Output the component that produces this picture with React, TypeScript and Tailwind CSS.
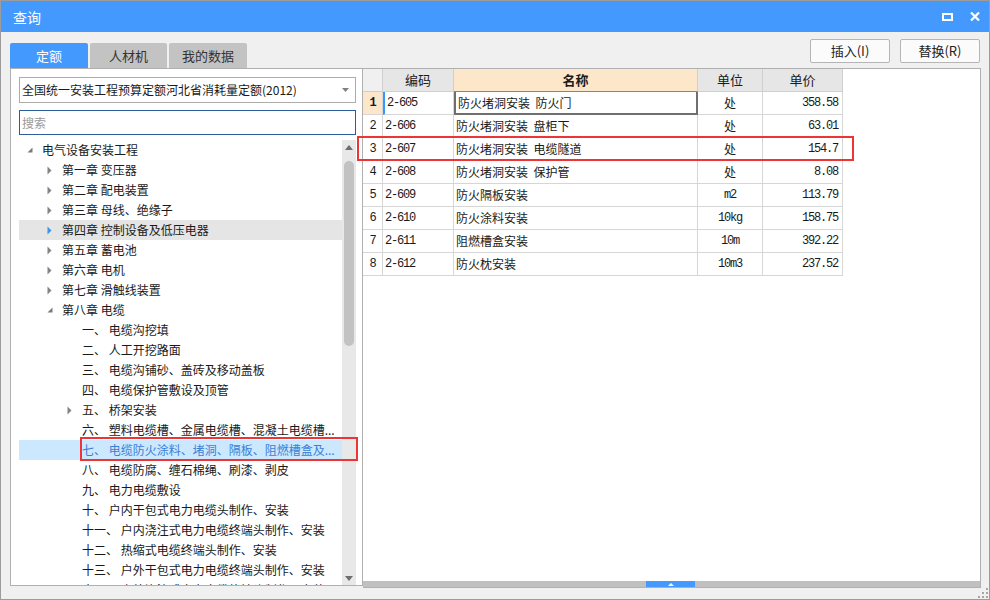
import React from "react";

type Node = {
	level: 0 | 1 | 2;
	label: string;
	arrow?: "open" | "closed";
	state?: "hover" | "selected";
};

const tree: Node[] = [
	{ level: 0, label: "电气设备安装工程", arrow: "open" },
	{ level: 1, label: "第一章 变压器", arrow: "closed" },
	{ level: 1, label: "第二章 配电装置", arrow: "closed" },
	{ level: 1, label: "第三章 母线、绝缘子", arrow: "closed" },
	{ level: 1, label: "第四章 控制设备及低压电器", arrow: "closed", state: "hover" },
	{ level: 1, label: "第五章 蓄电池", arrow: "closed" },
	{ level: 1, label: "第六章 电机", arrow: "closed" },
	{ level: 1, label: "第七章 滑触线装置", arrow: "closed" },
	{ level: 1, label: "第八章 电缆", arrow: "open" },
	{ level: 2, label: "一、 电缆沟挖填" },
	{ level: 2, label: "二、 人工开挖路面" },
	{ level: 2, label: "三、 电缆沟铺砂、盖砖及移动盖板" },
	{ level: 2, label: "四、 电缆保护管敷设及顶管" },
	{ level: 2, label: "五、 桥架安装", arrow: "closed" },
	{ level: 2, label: "六、 塑料电缆槽、金属电缆槽、混凝土电缆槽..." },
	{ level: 2, label: "七、 电缆防火涂料、堵洞、隔板、阻燃槽盒及...", state: "selected" },
	{ level: 2, label: "八、 电缆防腐、缠石棉绳、刷漆、剥皮" },
	{ level: 2, label: "九、 电力电缆敷设" },
	{ level: 2, label: "十、 户内干包式电力电缆头制作、安装" },
	{ level: 2, label: "十一、 户内浇注式电力电缆终端头制作、安装" },
	{ level: 2, label: "十二、 热缩式电缆终端头制作、安装" },
	{ level: 2, label: "十三、 户外干包式电力电缆终端头制作、安装" },
	{ level: 2, label: "十四、 户外浇注式电力电缆终端头制作、安装" },
];

const rows = [
	{ code: "2-605", name: "防火堵洞安装  防火门", unit: "处", price: "358.58" },
	{ code: "2-606", name: "防火堵洞安装  盘柜下", unit: "处", price: "63.01" },
	{ code: "2-607", name: "防火堵洞安装  电缆隧道", unit: "处", price: "154.7" },
	{ code: "2-608", name: "防火堵洞安装  保护管", unit: "处", price: "8.08" },
	{ code: "2-609", name: "防火隔板安装", unit: "m2", price: "113.79" },
	{ code: "2-610", name: "防火涂料安装", unit: "10kg", price: "158.75" },
	{ code: "2-611", name: "阻燃槽盒安装", unit: "10m", price: "392.22" },
	{ code: "2-612", name: "防火枕安装", unit: "10m3", price: "237.52" },
];

const indent = ["pl-0", "pl-[20px]", "pl-[40px]"];
const mono = "font-['Liberation_Mono',monospace] text-[12px] tracking-[-1.2px]";

const Arrow = ({ kind, blue }: { kind?: "open" | "closed"; blue?: boolean }) => {
	if (!kind) return null;
	if (kind === "open")
		return (
			<svg width="6" height="6" viewBox="0 0 6 6">
				<polygon points="5.5,0.5 5.5,5.5 0.5,5.5" fill="#7a7a7a" />
			</svg>
		);
	return (
		<svg width="5" height="9" viewBox="0 0 5 9">
			<polygon points="0.5,0.5 4.5,4.5 0.5,8.5" fill={blue ? "#3d95e8" : "#838383"} />
		</svg>
	);
};

const App: React.FC = () => {
	return (
		<div className="relative w-[990px] h-[600px] flex flex-col bg-[#f0f0f0] border border-[#9c9c9c] overflow-hidden font-['Noto_Sans_CJK_SC','Noto_Sans',sans-serif] text-[#1a1a1a]">
			{/* title bar */}
			<div className="h-[31px] shrink-0 bg-[#4499ff] flex items-center justify-between pl-[12px] pr-[9px]">
				<span className="text-white text-[14px] leading-none">查询</span>
				<div className="flex items-center gap-[17px]">
					<svg width="11" height="8" viewBox="0 0 11 8">
						<rect x="1" y="1" width="9" height="6" fill="none" stroke="#fff" strokeWidth="2" />
					</svg>
					<svg width="10" height="9" viewBox="0 0 10 9">
						<path d="M1 0.5 L9 8.5 M9 0.5 L1 8.5" stroke="#fff" strokeWidth="2.2" />
					</svg>
				</div>
			</div>

			{/* tabs and buttons */}
			<div className="h-[36px] shrink-0 flex justify-between pl-[9px] pr-[9px]">
				<div className="flex items-end gap-[2px]">
					<div className="w-[78px] h-[25px] rounded-t-[2px] bg-[#4499ff] text-white text-[13px] flex items-center justify-center">定额</div>
					<div className="w-[77px] h-[25px] rounded-t-[2px] bg-[#c3c3c3] text-[#333] text-[13px] flex items-center justify-center">人材机</div>
					<div className="w-[78px] h-[25px] rounded-t-[2px] bg-[#c3c3c3] text-[#333] text-[13px] flex items-center justify-center">我的数据</div>
				</div>
				<div className="flex gap-[10px] pt-[7px]">
					<button className="w-[80px] h-[24px] rounded-[2px] border border-[#b5b5b5] bg-[#fbfbfb] text-[13px] text-[#222]">插入(I)</button>
					<button className="w-[80px] h-[24px] rounded-[2px] border border-[#b5b5b5] bg-[#fbfbfb] text-[13px] text-[#222]">替换(R)</button>
				</div>
			</div>

			{/* content */}
			<div className="flex-1 min-h-0 flex pl-[9px] pr-[8px] pb-[11px]">
				{/* left panel */}
				<div className="w-[353px] shrink-0 mb-[2px] border border-[#b0b0b0] bg-white flex flex-col pt-[8px] pl-[8px] pr-[6px]">
					<div className="h-[26px] shrink-0 border border-[#acacac] flex items-center justify-between pl-[2px] pr-[6px]">
						<span className="text-[12px] leading-none">全国统一安装工程预算定额河北省消耗量定额(2012)</span>
						<svg width="7" height="4" viewBox="0 0 7 4">
							<polygon points="0,0 7,0 3.5,4" fill="#808080" />
						</svg>
					</div>
					<div className="h-[25px] mt-[7px] shrink-0 border border-[#2c5c9c] flex items-center pl-[2px]">
						<span className="text-[12px] leading-none text-[#9a9a9a]">搜索</span>
					</div>
					<div className="flex-1 min-h-0 mt-[5px] flex overflow-hidden">
						<div className="flex-1 min-w-0">
							{tree.map((n, i) => (
								<div
									key={i}
									className={`h-[20px] flex items-center ${indent[n.level]} ${
										n.state === "hover" ? "bg-[#e5e5e5]" : n.state === "selected" ? "bg-[#cce8ff]" : ""
									}`}
								>
									<div className="w-[23px] shrink-0 pl-[8px] flex items-center">
										<Arrow kind={n.arrow} blue={n.state === "hover"} />
									</div>
									<span
										className={`whitespace-pre text-[12px] leading-[20px] ${
											n.state === "selected" ? "text-[#3b7fd4]" : "text-[#1a1a1a]"
										}`}
									>
										{n.label}
									</span>
								</div>
							))}
						</div>
						<div className="w-[14px] shrink-0 bg-[#e8e8e8] flex flex-col items-center">
							<svg className="mt-[5px]" width="8" height="5" viewBox="0 0 8 5">
								<polygon points="0,5 8,5 4,0" fill="#6e6e6e" />
							</svg>
							<div className="mt-[11px] w-[10px] h-[185px] rounded-full bg-[#c2c2c2]" />
							<div className="flex-1" />
							<svg className="mb-[4px]" width="8" height="5" viewBox="0 0 8 5">
								<polygon points="0,0 8,0 4,5" fill="#6e6e6e" />
							</svg>
						</div>
					</div>
				</div>

				{/* right panel */}
				<div className="flex-1 min-w-0 border-t border-r border-b border-[#b0b0b0] bg-white flex flex-col">
					<div className="flex-1 min-h-0">
						{/* header */}
						<div className="flex h-[23px] text-[13px]">
							<div className="w-[20px] shrink-0 bg-[#f0f0f0] border-r border-b border-[#cfcfcf]" />
							<div className="w-[71px] shrink-0 bg-[#e6e6e6] border-r border-b border-[#cfcfcf] flex items-center justify-center">编码</div>
							<div className="w-[244px] shrink-0 bg-[#fde7cb] border-r border-b border-r-[#cfcfcf] border-b-[#3399ff] flex items-center justify-center font-bold">名称</div>
							<div className="w-[65px] shrink-0 bg-[#e6e6e6] border-r border-b border-[#cfcfcf] flex items-center justify-center">单位</div>
							<div className="w-[80px] shrink-0 bg-[#e6e6e6] border-r border-b border-[#cfcfcf] flex items-center justify-center">单价</div>
						</div>
						{rows.map((r, i) => {
							const first = i === 0;
							return (
								<div key={r.code} className="flex h-[23px]">
									<div
										className={`w-[20px] shrink-0 border-r border-b border-[#d6d6d6] flex items-center justify-center ${mono} ${
											first ? "bg-[#fde7cb] font-bold" : ""
										}`}
									>
										{i + 1}
									</div>
									<div
										className={`w-[71px] shrink-0 border-r border-b border-[#d6d6d6] flex items-center pl-[2px] ${mono} ${
											first ? "border-l-2 border-l-[#3399ff] pl-0" : ""
										}`}
									>
										{r.code}
									</div>
									<div
										className={`w-[244px] shrink-0 flex items-center pl-[2px] text-[12px] whitespace-pre ${
											first
												? "border-l-2 border-r-2 border-b-2 border-[#6f6f6f] pl-[1px]"
												: "border-r border-b border-[#d6d6d6]"
										}`}
									>
										{r.name}
									</div>
									<div
										className={`w-[65px] shrink-0 border-r border-b border-[#d6d6d6] flex items-center justify-center ${
											r.unit === "处" ? "text-[12px]" : mono
										}`}
									>
										{r.unit}
									</div>
									<div className={`w-[80px] shrink-0 border-r border-b border-[#d6d6d6] flex items-center justify-end pr-[4px] ${mono}`}>
										{r.price}
									</div>
								</div>
							);
						})}
					</div>
					<div className="h-[6px] shrink-0 bg-[#c0c0c0] flex">
						<div className="ml-[283px] w-[49px] h-full bg-[#4499ff] flex items-center justify-center">
							<svg width="6" height="3" viewBox="0 0 6 3">
								<polygon points="0,3 6,3 3,0" fill="#fff" />
							</svg>
						</div>
					</div>
				</div>
			</div>

			{/* annotation boxes */}
			<div className="absolute left-[356px] top-[135px] w-[497px] h-[25px] border-2 border-[#ee3535] pointer-events-none" />
			<div className="absolute left-[79px] top-[436px] w-[278px] h-[24px] border-2 border-[#ee3535] pointer-events-none" />

			{/* resize grip */}
			<svg className="absolute right-[1px] bottom-[1px]" width="10" height="10" viewBox="0 0 10 10">
				<rect x="8" y="0" width="2" height="2" fill="#a6a6a6" />
				<rect x="4" y="4" width="2" height="2" fill="#a6a6a6" />
				<rect x="8" y="4" width="2" height="2" fill="#a6a6a6" />
				<rect x="0" y="8" width="2" height="2" fill="#a6a6a6" />
				<rect x="4" y="8" width="2" height="2" fill="#a6a6a6" />
				<rect x="8" y="8" width="2" height="2" fill="#a6a6a6" />
			</svg>
		</div>
	);
};

export default App;
